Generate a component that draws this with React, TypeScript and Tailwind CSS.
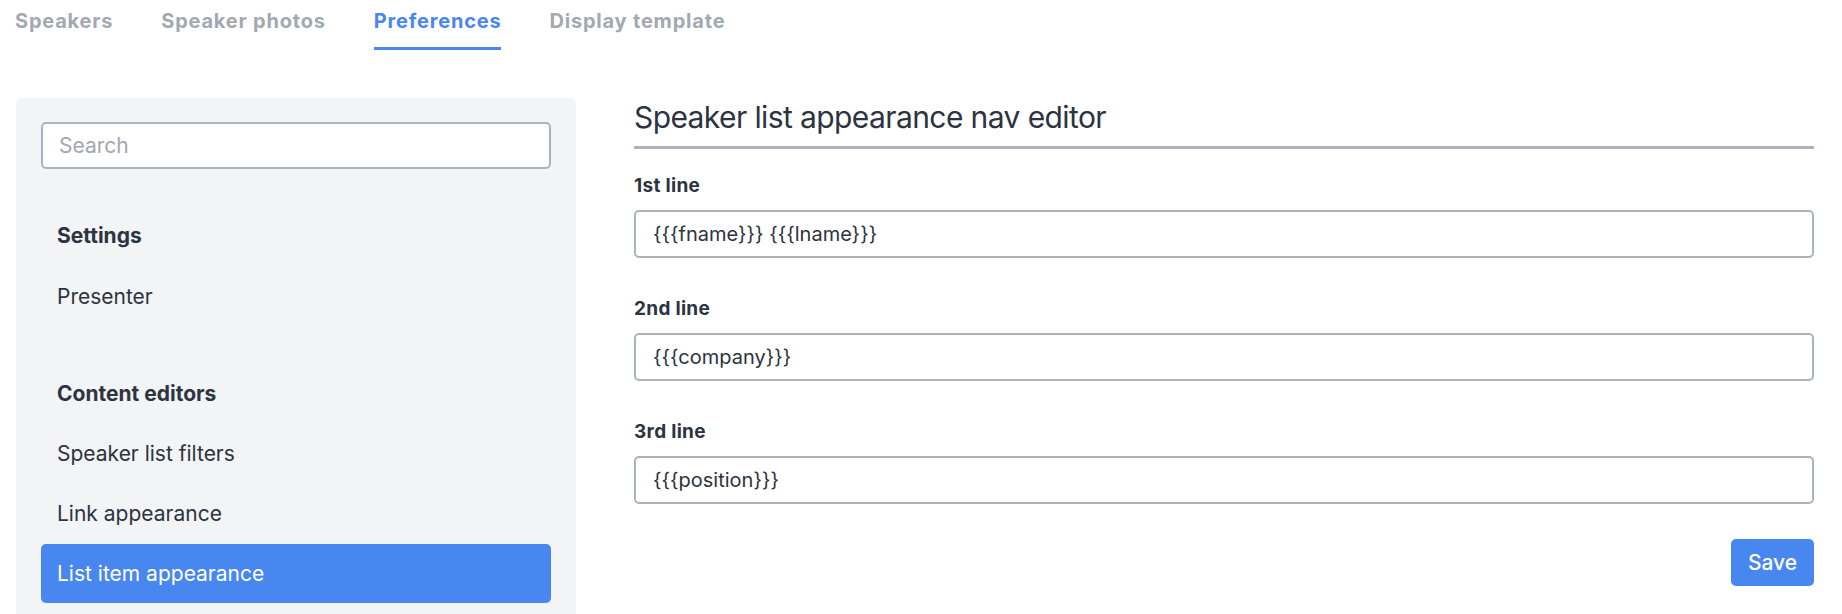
import React from 'react';

const tabs = ['Speakers', 'Speaker photos', 'Preferences', 'Display template'];

const fields = [
  { label: '1st line', value: '{{{fname}}} {{{lname}}}' },
  { label: '2nd line', value: '{{{company}}}' },
  { label: '3rd line', value: '{{{position}}}' },
];

export default function App() {
  return (
    <div className="min-h-[614px] bg-white text-[#2d3340] font-['Inter','Liberation_Sans',sans-serif]">
      <nav className="flex gap-[48px] px-[15px]">
        {tabs.map((t) => (
          <button
            key={t}
            className={`pt-[7px] pb-[12px] leading-7 text-[20px] font-bold tracking-[0.8px] border-b-[3px] ${
              t === 'Preferences' ? 'text-[#4a86ef] border-[#4a86ef]' : 'text-[#a3a8b1] border-transparent'
            }`}
          >
            {t}
          </button>
        ))}
      </nav>

      <div className="flex gap-[58px] pl-4 pr-[28px] mt-[48px]">
        <aside className="w-[560px] shrink-0 rounded-md bg-[#f3f4f6] px-[25px] pt-[24px] pb-4">
          <input
            placeholder="Search"
            className="w-full h-[47px] rounded-[5px] border-2 border-[#aeb3bb] bg-white px-4 text-[21px] placeholder:text-[#a3a8b1] outline-none"
          />
          <div className="mt-[37px]">
            <div className="h-[60px] flex items-center px-4 text-[21px] font-bold">Settings</div>
            <div className="h-[61px] flex items-center px-4 text-[21px]">Presenter</div>
          </div>
          <div className="mt-[37px]">
            <div className="h-[59px] flex items-center px-4 text-[21px] font-bold">Content editors</div>
            <div className="h-[61px] flex items-center px-4 text-[21px]">Speaker list filters</div>
            <div className="h-[60px] flex items-center px-4 text-[21px]">Link appearance</div>
            <div className="h-[59px] flex items-center px-4 text-[21px] rounded-[5px] bg-[#4886f0] text-white">
              List item appearance
            </div>
          </div>
        </aside>

        <main className="flex-1">
          <h1 className="mt-[1px] pb-[11px] leading-9 text-[30px] tracking-[-0.6px] border-b-[3px] border-[#aeb3bb]">
            Speaker list appearance nav editor
          </h1>
          {fields.map((f, i) => (
            <div key={f.label} className={i === 0 ? 'mt-[26px]' : 'mt-[40px]'}>
              <label className="block text-[19px] font-bold tracking-[0.3px] leading-[22px]">{f.label}</label>
              <input
                defaultValue={f.value}
                className="mt-[13px] w-full h-[48px] rounded-[5px] border-2 border-[#aeb3bb] px-[17px] text-[20px] text-[#2d3340] outline-none"
              />
            </div>
          ))}
          <div className="flex justify-end mt-[35px]">
            <button className="h-[47px] w-[83px] rounded-[5px] bg-[#4886f0] text-white text-[21px] font-medium">
              Save
            </button>
          </div>
        </main>
      </div>
    </div>
  );
}
